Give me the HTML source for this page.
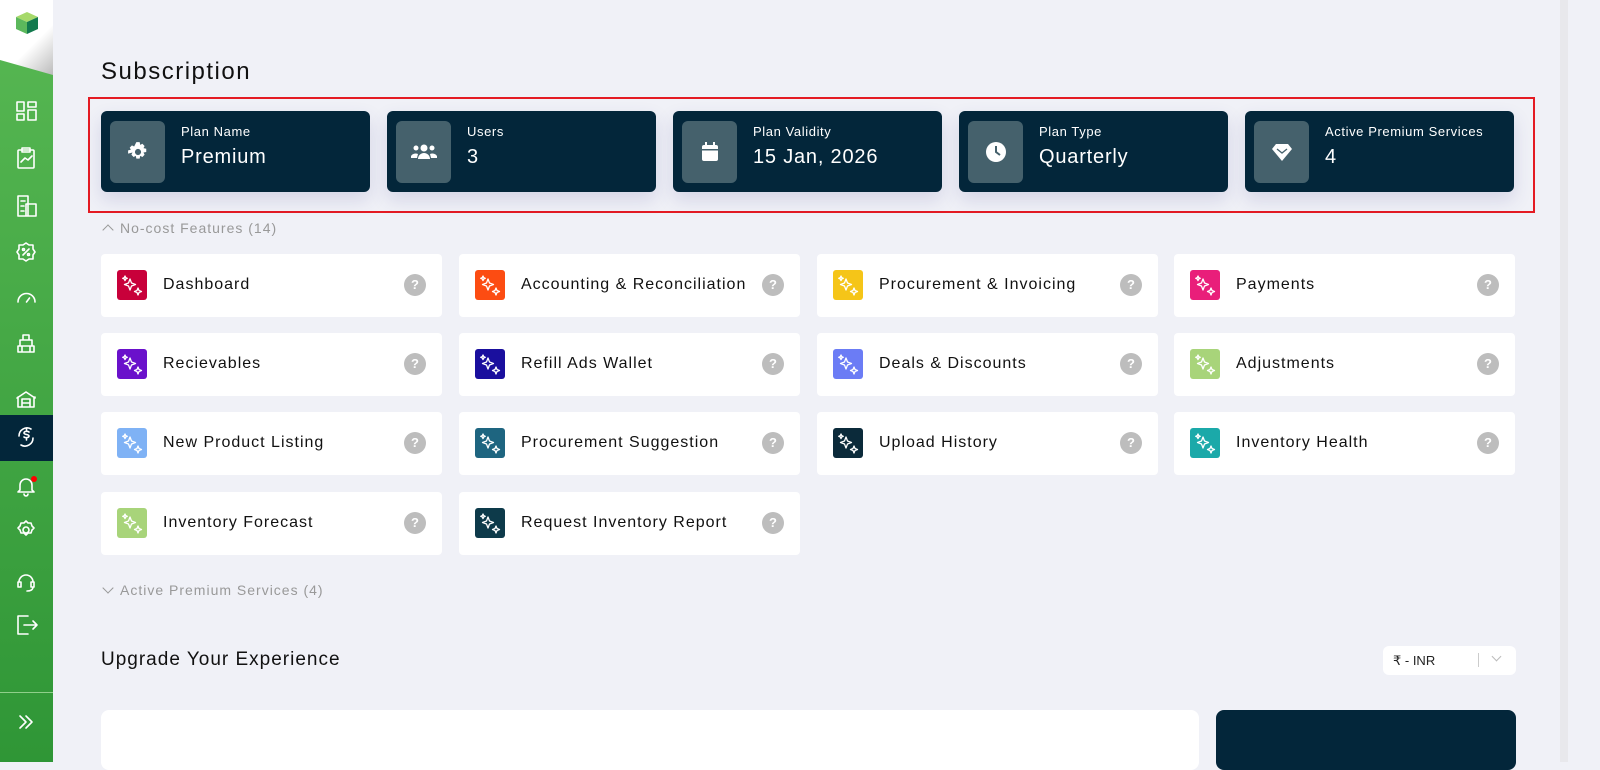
<!DOCTYPE html>
<html><head><meta charset="utf-8"><style>
*{box-sizing:border-box;margin:0;padding:0}
body{width:1600px;height:762px;overflow:hidden;background:#f0f1f7;font-family:"Liberation Sans",sans-serif;position:relative;color:#111}
.side{position:absolute;left:0;top:0;width:53px;height:762px;background:linear-gradient(#58b853,#2f9636)}
.logo{position:absolute;left:0;top:0;width:53px;height:75px;background:linear-gradient(135deg,#fff 60%,#bbb);clip-path:polygon(0 0,100% 0,100% 100%,0 80%)}
.act{position:absolute;left:0;top:415px;width:53px;height:46px;background:#03263a}
.sb{position:absolute;right:32px;top:0;width:8px;height:762px;background:#e8e8ec}
h1{position:absolute;left:101px;top:58px;font-size:24px;font-weight:500;color:#111;letter-spacing:1.5px}
.red{position:absolute;left:88px;top:97px;width:1447px;height:116px;border:2px solid #e41b23}
.stat{position:absolute;top:111px;width:269px;height:81px;background:#03263a;border-radius:6px;box-shadow:0 8px 18px rgba(60,60,140,.15)}
.stat .ib{position:absolute;left:9px;top:10px;width:55px;height:62px;background:#45616c;border-radius:6px;display:flex;align-items:center;justify-content:center}
.stat .l{position:absolute;left:80px;top:13px;color:#fff;font-size:13px;letter-spacing:.6px}
.stat .v{position:absolute;left:80px;top:35px;color:#fff;font-size:20px;letter-spacing:.8px}
.sec{position:absolute;left:101px;font-size:14px;color:#999;letter-spacing:1px}
.f{position:absolute;width:341px;height:63px;background:#fff;border-radius:4px}
.f .ic{position:absolute;left:16px;top:16px;width:30px;height:30px;border-radius:3px;display:flex;align-items:center;justify-content:center}
.f .t{position:absolute;left:62px;top:22px;font-size:16px;color:#111;letter-spacing:1px}
.f .q{position:absolute;right:16px;top:20px;width:22px;height:22px;border-radius:50%;background:#bdbdbd;color:#fff;font-size:13px;font-weight:bold;text-align:center;line-height:22px}
</style></head><body>
<div class="side">
<div class="logo"></div>
<svg style="position:absolute;left:14px;top:10px" width="26" height="26" viewBox="0 0 26 26"><polygon points="13,2 24,7 13,12 2,7" fill="#a6d96a"/><polygon points="2,7 13,12 13,24 2,19" fill="#5cb85c"/><polygon points="24,7 13,12 13,24 24,19" fill="#137a4e"/></svg>
<div class="act"></div>
<svg width="53" height="762" style="position:absolute;left:0;top:0" fill="none" stroke="#fff" stroke-width="1.6" stroke-linecap="round" stroke-linejoin="round">
<rect x="17" y="102" width="7" height="9"/><rect x="28" y="102" width="8" height="5"/><rect x="17" y="114" width="7" height="6"/><rect x="28" y="110" width="8" height="10"/>
<rect x="18" y="150" width="16" height="18" rx="1"/><path d="M22 148h8v4h-8z M21 162l4-4 3 2 4-4"/>
<path d="M18 196h10v20h-10z M26 204h10v12h-10z M21 201h4 M21 206h3 M21 211h3"/>
<path d="M26 243l3 2 4 0 0 4 2 3-2 3 0 4-4 0-3 2-3-2-4 0 0-4-2-3 2-3 0-4 4 0z M23 255l6-6"/><circle cx="23.5" cy="249.5" r="1"/><circle cx="28.5" cy="254.5" r="1"/>
<path d="M18 302a8.5 8.5 0 0 1 17 0 M26.5 302l3-4"/>
<path d="M18 352h16v-6h-16z M20 346v-6h12v6 M23 340v-5h6v5 M22 346v6 M30 346v6"/>
<path d="M17 398l9-6 9 6v-1 M18 397v10h16v-10 M22 407v-8h8v8 M22 403h8"/>
<path d="M19 436a8 8 0 0 1 12-7 M33 438a8 8 0 0 1-12 7 M29 432c-1-1-5-1-5 1s5 1 5 3-4 2-5 1 M26.5 429v2 M26.5 438v2"/>
<path d="M20 490v-5a6 6 0 0 1 12 0v5l2 2h-16z M24 494a2 2 0 0 0 4 0"/>
<path d="M26 521l2 2h3l1 3 2 2-2 2-1 3h-3l-2 2-2-2h-3l-1-3-2-2 2-2 1-3h3z"/><circle cx="26" cy="530" r="3"/>
<path d="M19 582a7 7 0 0 1 14 0 M18 582v5h3v-5h-3 M34 582v5h-3v-5h3 M33 587c0 3-3 4-6 4"/>
<path d="M28 616h-10v18h10 M24 625h13 M33 621l4 4-4 4"/>
<path d="M20 716l6 6-6 6 M26 716l6 6-6 6"/>
</svg>
<div style="position:absolute;left:0;top:692px;width:53px;height:1px;background:#8fcf8a"></div>
<div style="position:absolute;left:31px;top:476px;width:6px;height:6px;border-radius:50%;background:#f00"></div>
</div>
<div class="sb"></div>
<h1>Subscription</h1>
<div class="red"></div>

<div class="stat" style="left:101px"><div class="ib"><svg width="22" height="22" viewBox="0 0 20 20"><path d="M8.5 1h3l.5 2.5 2-1 2 2-1 2 2.5.5v3l-2.5.5 1 2-2 2-2-1-.5 2.5h-3l-.5-2.5-2 1-2-2 1-2L1 11.5v-3l2.5-.5-1-2 2-2 2 1z" fill="#fff"/><circle cx="10" cy="10" r="2.8" fill="#45616c"/></svg></div><div class="l">Plan Name</div><div class="v">Premium</div></div>
<div class="stat" style="left:387px"><div class="ib"><svg width="26" height="20" viewBox="0 0 26 20" fill="#fff"><circle cx="13" cy="6" r="3.5"/><circle cx="5" cy="6" r="2.5"/><circle cx="21" cy="6" r="2.5"/><path d="M7 17a6 6 0 0 1 12 0z M0 14a5 4 0 0 1 7-2l-1 4h-6z M26 14a5 4 0 0 0-7-2l1 4h6z"/></svg></div><div class="l">Users</div><div class="v">3</div></div>
<div class="stat" style="left:673px"><div class="ib"><svg width="18" height="20" viewBox="0 0 18 20" fill="#fff"><rect x="1" y="3" width="16" height="16" rx="2"/><rect x="4" y="0" width="2" height="4"/><rect x="12" y="0" width="2" height="4"/><rect x="1" y="7" width="16" height="1.5" fill="#45616c"/></svg></div><div class="l">Plan Validity</div><div class="v">15 Jan, 2026</div></div>
<div class="stat" style="left:959px"><div class="ib"><svg width="22" height="22" viewBox="0 0 22 22"><circle cx="11" cy="11" r="10" fill="#fff"/><path d="M11 5v6l4 3" stroke="#45616c" stroke-width="2" fill="none"/></svg></div><div class="l">Plan Type</div><div class="v">Quarterly</div></div>
<div class="stat" style="left:1245px"><div class="ib"><svg width="22" height="20" viewBox="0 0 22 20" fill="#fff"><path d="M5 2h12l4 5-10 12L1 7z"/><path d="M6 7l5 4 5-4" stroke="#45616c" stroke-width="1.3" fill="none"/></svg></div><div class="l">Active Premium Services</div><div class="v">4</div></div>

<div class="sec" style="top:220px"><span style="display:inline-block;width:8px;height:8px;border-left:1.5px solid #999;border-top:1.5px solid #999;transform:rotate(45deg);margin:0 8px 0 3px;position:relative;top:1px"></span>No-cost Features (14)</div>

<svg width="0" height="0" style="position:absolute"><defs><g id="sp" fill="none" stroke="#fff" stroke-width="1.3" stroke-linejoin="round"><path d="M10 6l1.5 4 4 1.5-4 1.5-1.5 4-1.5-4-4-1.5 4-1.5z"/><path d="M18 15l1 2.5 2.5 1-2.5 1-1 2.5-1-2.5-2.5-1 2.5-1z"/><path d="M5 3l.7 1.6 1.6.7-1.6.7L5 7.6l-.7-1.6-1.6-.7 1.6-.7z"/></g></defs></svg>

<div id="grid"></div>
<script>
var items=[["Dashboard","#c8003a"],["Accounting & Reconciliation","#fc4c12"],["Procurement & Invoicing","#f5c518"],["Payments","#e91e7a"],["Recievables","#6a11cb"],["Refill Ads Wallet","#1a0f9e"],["Deals & Discounts","#6b7cf5"],["Adjustments","#a8d47a"],["New Product Listing","#7fb2f5"],["Procurement Suggestion","#1e6580"],["Upload History","#0b2a3a"],["Inventory Health","#1ba9a9"],["Inventory Forecast","#a8d47a"],["Request Inventory Report","#0d3a4a"]];
var xs=[101,459,817,1174],ys=[254,333,412,492],h="";
items.forEach(function(it,i){h+='<div class="f" style="left:'+xs[i%4]+'px;top:'+ys[Math.floor(i/4)]+'px"><div class="ic" style="background:'+it[1]+'"><svg width="24" height="24" viewBox="0 0 24 24"><use href="#sp"/></svg></div><div class="t">'+it[0].replace("&","&amp;")+'</div><div class="q">?</div></div>';});
document.getElementById("grid").innerHTML=h;
</script>

<div class="sec" style="top:582px"><span style="display:inline-block;width:8px;height:8px;border-right:1.5px solid #999;border-bottom:1.5px solid #999;transform:rotate(45deg);margin:0 8px 0 3px;position:relative;top:-3px"></span>Active Premium Services (4)</div>

<div style="position:absolute;left:101px;top:649px;font-size:19px;font-weight:500;color:#111;letter-spacing:1px">Upgrade Your Experience</div>
<div style="position:absolute;left:1383px;top:646px;width:133px;height:29px;background:#fff;border-radius:6px;font-size:13px;color:#222">
<span style="position:absolute;left:10px;top:7px">₹ - INR</span>
<span style="position:absolute;left:95px;top:7px;width:1px;height:14px;background:#ccc"></span>
<span style="position:absolute;left:110px;top:7px;width:7px;height:7px;border-right:1.5px solid #bbb;border-bottom:1.5px solid #bbb;transform:rotate(45deg)"></span>
</div>
<div style="position:absolute;left:101px;top:710px;width:1098px;height:60px;background:#fff;border-radius:8px"></div>
<div style="position:absolute;left:1216px;top:710px;width:300px;height:60px;background:#03263a;border-radius:8px"></div>
</body></html>
